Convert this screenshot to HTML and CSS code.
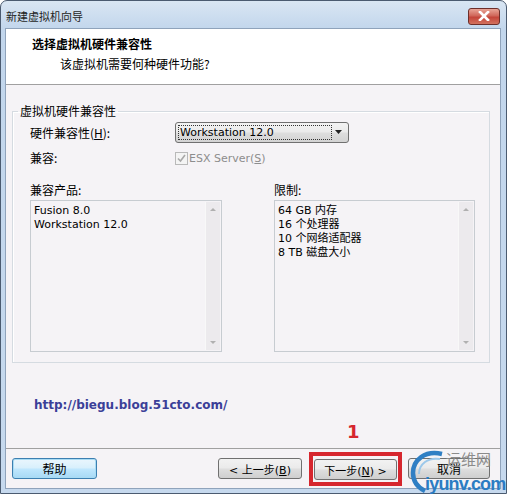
FILE: index.html
```html
<!DOCTYPE html>
<html>
<head>
<meta charset="utf-8">
<link rel="stylesheet" href="styles.css">
</head>
<body>
<div class="window">
  <div class="titlebar">
    <span class="title">新建虚拟机向导</span>
    <span class="close"><svg width="14" height="10" viewBox="0 0 14 10"><path d="M3 1 L11 9 M11 1 L3 9" stroke="#fff" stroke-width="2.6" stroke-linecap="square"/></svg></span>
  </div>
  <div class="client">
    <div class="header">
      <div class="h-title">选择虚拟机硬件兼容性</div>
      <div class="h-sub">该虚拟机需要何种硬件功能?</div>
    </div>
    <div class="content">
      <fieldset class="group">
        <legend>虚拟机硬件兼容性</legend>
        <div class="row row1">
          <span class="lbl">硬件兼容性(<u>H</u>):</span>
          <div class="combo">
            <span class="combo-text">Workstation 12.0</span>
            <span class="combo-arrow"><svg width="8" height="5" viewBox="0 0 8 5"><path d="M0 0 H7 L3.5 4 Z" fill="#222"/></svg></span>
          </div>
        </div>
        <div class="row row2">
          <span class="lbl">兼容:</span>
          <div class="check">
            <span class="box"><svg width="11" height="11" viewBox="0 0 11 11"><path d="M2 5.5 L4.5 8 L9 2" stroke="#a8a8a8" stroke-width="1.6" fill="none"/></svg></span>
            <span class="check-text">ESX Server(<u>S</u>)</span>
          </div>
        </div>
        <div class="lists">
          <div class="listcol left">
            <div class="list-lbl">兼容产品:</div>
            <div class="listbox">
              <div class="items">
                <div>Fusion 8.0</div>
                <div>Workstation 12.0</div>
              </div>
              <div class="sb">
                <span class="sb-up"></span>
                <span class="sb-down"></span>
              </div>
            </div>
          </div>
          <div class="listcol right">
            <div class="list-lbl">限制:</div>
            <div class="listbox">
              <div class="items">
                <div>64 GB 内存</div>
                <div>16 个处理器</div>
                <div>10 个网络适配器</div>
                <div>8 TB 磁盘大小</div>
              </div>
              <div class="sb">
                <span class="sb-up"></span>
                <span class="sb-down"></span>
              </div>
            </div>
          </div>
        </div>
      </fieldset>
      <div class="url">http://biegu.blog.51cto.com/</div>
    </div>
    <div class="buttons">
      <button class="btn help">帮助</button>
      <div class="nav">
        <button class="btn back">&lt; 上一步(<u>B</u>)</button>
        <div class="highlight"><button class="btn next">下一步(<u>N</u>) &gt;</button><span class="mark">1</span></div>
        <button class="btn cancel">取消</button>
      </div>
    </div>
  </div>
  <div class="watermark">
    <svg class="wm-arc" width="36" height="44" viewBox="0 0 36 44"><path d="M33 5 C16 1 4 11 4 24 C4 33 10 39 16 42" stroke="#2f7fc4" stroke-width="4.5" fill="none"/><path d="M31 10 C19 8 10 15 10 25" stroke="#9cc8ea" stroke-width="2" fill="none"/></svg>
    <span class="wm-zh">运维网</span>
    <span class="wm-en">iyunv.com</span>
  </div>
</div>
</body>
</html>
```
FILE: styles.css
```css
* { box-sizing: border-box; }
html, body { margin: 0; padding: 0; background: #ffffff; }
body { width: 507px; height: 494px; overflow: hidden; font-family: "DejaVu Sans", "Noto Sans CJK SC", sans-serif; font-size: 11px; color: #000; }
u { text-decoration: underline; text-underline-offset: 1px; }

.window {
  position: relative;
  width: 507px; height: 494px;
  border: 1px solid #4b5b70;
  border-radius: 7px 7px 0 0;
  background: linear-gradient(#d9e6f3, #c2d6ec 28px, #c6d9ee);
  display: flex; flex-direction: column;
  padding: 0 5px 4px 4px;
}
.titlebar {
  height: 27px; flex: none;
  display: flex; align-items: center; justify-content: space-between;
  padding: 0 1px 0 1px;
}
.title { font-family: "Noto Sans CJK SC", sans-serif; font-size: 11px; line-height: 14px; color: #1e1e1e; margin-top: 3px; }
.close {
  width: 32px; height: 17px; margin-top: 3px;
  border: 1px solid #6d2f2a; border-radius: 3px;
  background: linear-gradient(#e9a597, #d0675a 45%, #c4453a 55%, #d2725f);
  display: flex; align-items: center; justify-content: center;
}
.client {
  flex: 1; display: flex; flex-direction: column;
  border: 1px solid #8fa3bb;
  background: #f5f3f6;
}
.header {
  height: 56px; flex: none; background: #fff;
  border-bottom: 1px solid #a0a0a0;
  padding: 7px 0 0 26px;
}
.h-title { font-family: "Noto Sans CJK SC", sans-serif; font-weight: bold; font-size: 12px; line-height: 16px; }
.h-sub { font-family: "Noto Sans CJK SC", sans-serif; font-size: 12px; line-height: 16px; margin: 4px 0 0 28px; }

.content { flex: 1; padding: 19px 10px 0 6px; }
.group {
  margin: 0; padding: 4px 14px 10px 17px;
  border: 1px solid #d5dbe1;
  box-shadow: inset 1px 1px 0 #fff;
  min-width: 0;
}
.group legend {
  font-family: "Noto Sans CJK SC", sans-serif; font-size: 12px; line-height: 14px;
  padding: 0 2px; margin-left: -12px;
}
.lbl { font-family: "Noto Sans CJK SC", sans-serif; font-size: 12px; line-height: 14px; width: 145px; flex: none; }
.row { display: flex; align-items: center; }
.row1 { height: 21px; }
.row2 { height: 18px; margin-top: 6px; }
.combo {
  width: 174px; height: 21px;
  border: 1px solid #707070; border-radius: 3px;
  background: linear-gradient(#f3f3f3, #ebebeb 45%, #dddddd 55%, #d3d3d3);
  display: flex; align-items: center; padding: 2px;
}
.combo-text {
  width: 154px; height: 15px; line-height: 13px;
  border: 1px dotted #333; padding-left: 1px; font-size: 11px;
}
.combo-arrow { flex: 1; display: flex; justify-content: center; }
.check { display: flex; align-items: center; color: #8d8d8d; }
.box { width: 13px; height: 13px; border: 1px solid #b9b9b9; background: #f4f4f4; display: flex; align-items: center; justify-content: center; margin-right: 1px; }
.check-text { font-size: 11px; }

.lists { display: flex; margin-top: 16px; }
.listcol { display: flex; flex-direction: column; }
.listcol.left { width: 192px; }
.listcol.right { width: 201px; margin-left: 52px; }
.list-lbl { font-family: "Noto Sans CJK SC", sans-serif; font-size: 12px; line-height: 14px; height: 17px; }
.listbox {
  height: 152px; border: 1px solid #c7ccd1;
  display: flex; background: #f5f3f6;
}
.items { flex: 1; padding: 3px 0 0 3px; font-size: 11px; line-height: 14px; }
.sb { width: 15px; margin: 1px 1px 1px 0; background: #eceaed; border-left: 1px solid #f8f8f8; display: flex; flex-direction: column; justify-content: space-between; align-items: center; padding: 6px 0; }
.sb-up, .sb-down { width: 0; height: 0; border-left: 3px solid transparent; border-right: 3px solid transparent; }
.sb-up { border-bottom: 3px solid #b0b0b0; }
.sb-down { border-top: 3px solid #b0b0b0; }

.url { margin: 35px 0 0 22px; font-family: "DejaVu Sans", sans-serif; font-weight: bold; font-size: 12px; color: #3b3f98; }

.buttons {
  height: 40px; flex: none; border-top: 1px solid #a0a0a0;
  display: flex; align-items: center; justify-content: space-between;
  padding: 0 0 0 6px;
}
.btn {
  height: 21px; width: 84px; padding: 0;
  border: 1px solid #707070; border-radius: 3px;
  background: linear-gradient(#f2f2f2, #ebebeb 45%, #dddddd 55%, #cfcfcf);
  font-family: "DejaVu Sans", "Noto Sans CJK SC", sans-serif; font-size: 11px; color: #000;
}
.btn.help { border-color: #3c7fb1; box-shadow: inset 0 0 0 1px #a9dcf4; background: linear-gradient(#eaf6fd, #d9f0fc 45%, #bee6fd 55%, #a7d9f5); font-family: "Noto Sans CJK SC", sans-serif; font-size: 12px; width: 85px; }
.nav { display: flex; align-items: center; }
.back { margin-right: 7px; }
.highlight { position: relative; border: 4px solid #d6262e; padding: 3px 1px 2px 1px; display: flex; margin-top: 1px; }
.next { width: 83px; }
.mark { position: absolute; top: -35px; left: 34px; color: #d6262e; font-family: "DejaVu Sans", sans-serif; font-weight: bold; font-size: 18px; }
.cancel { width: 82px; margin-left: 6px; margin-right: 10px; font-family: "Noto Sans CJK SC", sans-serif; font-size: 12px; }

.watermark { position: absolute; left: 406px; top: 446px; width: 99px; height: 48px; }
.wm-arc { position: absolute; left: 2px; top: 2px; }
.wm-zh { position: absolute; left: 39px; top: 3px; font-family: "Noto Sans CJK SC", sans-serif; font-size: 15px; line-height: 18px; color: #8b8b8b; }
.wm-en { position: absolute; left: 18px; top: 27px; font-family: "Liberation Sans", sans-serif; font-weight: bold; font-size: 18px; line-height: 20px; color: #2b7cc3; letter-spacing: -0.8px; }
```
